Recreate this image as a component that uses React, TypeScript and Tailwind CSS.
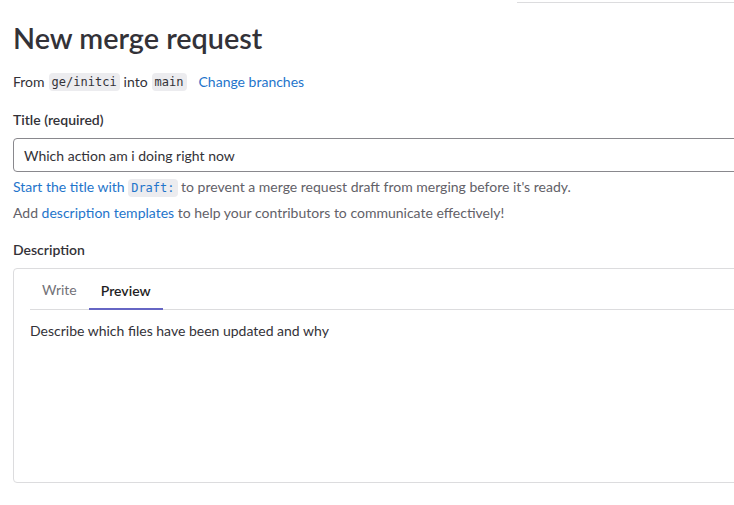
const font = { fontFamily: '"Segoe UI", Lato, sans-serif' };

function Code({ children, link }: { children: React.ReactNode; link?: boolean }) {
  return (
    <code
      className={
        'rounded-[4px] bg-[#ececef] px-[3px] py-[2px] text-[12px] font-["DejaVu_Sans_Mono",monospace] ' +
        (link ? 'text-[#1f75cb]' : 'text-[#333238]')
      }
    >
      {children}
    </code>
  );
}

export default function App() {
  return (
    <div className="relative h-[505px] w-[734px] overflow-hidden bg-white text-[14px] text-[#333238]" style={font}>
      {/* top bar edge */}
      <div className="absolute left-[517px] top-[2px] h-px w-[240px] bg-[#dcdcde]" />

      <div className="w-[780px] pl-[13px] pt-[20px]">
        <h1 className="text-[28.8px] font-semibold leading-[36px] text-[#333238]">New merge request</h1>

        <div className="mt-[15px] flex items-center leading-[20px]">
          <span>From</span>
          <span className="ml-[4px]"><Code>ge/initci</Code></span>
          <span className="ml-[4px]">into</span>
          <span className="ml-[4px]"><Code>main</Code></span>
          <a className="ml-[12px] text-[#1f75cb]">Change branches</a>
        </div>

        <label className="mt-[18px] block font-semibold leading-[20px]">Title (required)</label>
        <div className="mt-[8px] flex h-[34px] items-center rounded-[4px] border border-[#89888d] px-[10px]">
          Which action am i doing right now
        </div>
        <p className="mt-[5px] leading-[20px] text-[#626168]">
          <a className="text-[#1f75cb]">Start the title with <Code link>Draft:</Code></a> to prevent a merge request
          draft from merging before it's ready.
        </p>
        <p className="mt-[5px] leading-[20px] text-[#626168]">
          Add <a className="text-[#1f75cb]">description templates</a> to help your contributors to communicate
          effectively!
        </p>

        <label className="mt-[17px] block font-semibold leading-[20px]">Description</label>
        <div className="mt-[8px] h-[215px] rounded-[4px] border border-[#dcdcde] px-[16px]">
          <div className="flex border-b border-[#dcdcde]">
            <button className="px-[12px] pb-[9px] pt-[11px] leading-[20px] text-[#737278]">Write</button>
            <button className="-mb-px border-b-2 border-[#6666c4] px-[12px] pb-[7px] pt-[11px] font-semibold leading-[20px] text-[#1f1e24]">
              Preview
            </button>
          </div>
          <p className="pt-[11px] leading-[20px]">Describe which files have been updated and why</p>
        </div>
      </div>
    </div>
  );
}
